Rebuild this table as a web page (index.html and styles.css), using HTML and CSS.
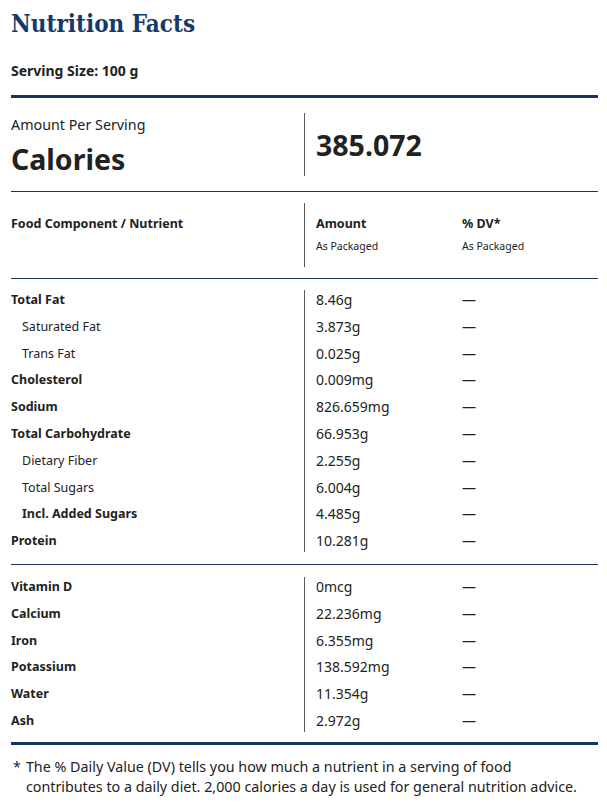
FILE: index.html
```html
<!DOCTYPE html>
<html lang="en">
<head>
<meta charset="utf-8">
<title>Nutrition Facts</title>
<link rel="stylesheet" href="styles.css">
</head>
<body>
<div class="label">
  <h1 class="title">Nutrition Facts</h1>
  <p class="serving">Serving Size: 100 g</p>
  <hr class="rule-thick rule-top">

  <section class="block calories">
    <div class="names">
      <div class="per-serving">Amount Per Serving</div>
      <div class="cal-word">Calories</div>
    </div>
    <div class="figures cal-figure">
      <div class="cal-value">385.072</div>
    </div>
  </section>
  <hr class="rule-thin">

  <section class="block head">
    <div class="names">
      <div class="head-title">Food Component / Nutrient</div>
    </div>
    <div class="figures head-figures">
      <div class="head-col">
        <div class="head-title">Amount</div>
        <div class="head-sub">As Packaged</div>
      </div>
      <div class="head-col">
        <div class="head-title">% DV*</div>
        <div class="head-sub">As Packaged</div>
      </div>
    </div>
  </section>
  <hr class="rule-thin">

  <section class="block rows">
    <div class="names">
      <div class="name bold">Total Fat</div>
      <div class="name indent">Saturated Fat</div>
      <div class="name indent">Trans Fat</div>
      <div class="name bold">Cholesterol</div>
      <div class="name bold">Sodium</div>
      <div class="name bold">Total Carbohydrate</div>
      <div class="name indent">Dietary Fiber</div>
      <div class="name indent">Total Sugars</div>
      <div class="name indent bold">Incl. Added Sugars</div>
      <div class="name bold">Protein</div>
    </div>
    <div class="figures grid">
      <div class="val">8.46g</div><div class="dv">—</div>
      <div class="val">3.873g</div><div class="dv">—</div>
      <div class="val">0.025g</div><div class="dv">—</div>
      <div class="val">0.009mg</div><div class="dv">—</div>
      <div class="val">826.659mg</div><div class="dv">—</div>
      <div class="val">66.953g</div><div class="dv">—</div>
      <div class="val">2.255g</div><div class="dv">—</div>
      <div class="val">6.004g</div><div class="dv">—</div>
      <div class="val">4.485g</div><div class="dv">—</div>
      <div class="val">10.281g</div><div class="dv">—</div>
    </div>
  </section>
  <hr class="rule-thin">

  <section class="block rows last">
    <div class="names">
      <div class="name bold">Vitamin D</div>
      <div class="name bold">Calcium</div>
      <div class="name bold">Iron</div>
      <div class="name bold">Potassium</div>
      <div class="name bold">Water</div>
      <div class="name bold">Ash</div>
    </div>
    <div class="figures grid">
      <div class="val">0mcg</div><div class="dv">—</div>
      <div class="val">22.236mg</div><div class="dv">—</div>
      <div class="val">6.355mg</div><div class="dv">—</div>
      <div class="val">138.592mg</div><div class="dv">—</div>
      <div class="val">11.354g</div><div class="dv">—</div>
      <div class="val">2.972g</div><div class="dv">—</div>
    </div>
  </section>
  <hr class="rule-thick">

  <div class="footnote">
    <span class="star">*</span>
    <p class="note">The % Daily Value (DV) tells you how much a nutrient in a serving of food contributes to a daily diet. 2,000 calories a day is used for general nutrition advice.</p>
  </div>
</div>
</body>
</html>
```
FILE: styles.css
```css
html, body {
  margin: 0;
  padding: 0;
  background: #ffffff;
}

body {
  font-family: "Noto Sans", "Open Sans", sans-serif;
  color: #222222;
}

.label {
  width: 587px;
  margin-left: 11px;
  padding-top: 9px;
}

.title {
  margin: 0;
  font-family: "DejaVu Serif Condensed", "DejaVu Serif", serif;
  font-stretch: condensed;
  font-weight: 700;
  font-size: 24px;
  line-height: 30px;
  color: #15396a;
}

.serving {
  margin: 23px 0 0;
  font-size: 14px;
  line-height: 18px;
  font-weight: 700;
}

.rule-thick {
  margin: 0;
  border: 0;
  height: 3px;
  background: #16365f;
}

.rule-top {
  margin-top: 15px;
}

.rule-thin {
  margin: 0;
  border: 0;
  height: 1px;
  background: #16365f;
}

.block {
  display: grid;
  grid-template-columns: 293px 1fr;
}

.figures {
  border-left: 1px solid #5a5a5a;
  padding-left: 11px;
}

/* Calories */
.calories {
  padding: 15px 0;
}

.calories .names {
  padding-top: 2px;
}

.per-serving {
  font-size: 14.3px;
  line-height: 20px;
}

.cal-word {
  margin-top: 7px;
  font-size: 28.5px;
  line-height: 34px;
  font-weight: 700;
}

.cal-figure {
  display: flex;
  align-items: center;
}

.cal-value {
  font-size: 28.5px;
  line-height: 34px;
  font-weight: 700;
}

/* Header */
.head {
  padding: 11px 0;
}

.head .names {
  padding-top: 12px;
}

.head-figures {
  display: grid;
  grid-template-columns: 146px 1fr;
  padding-top: 12px;
  padding-bottom: 13px;
}

.head-col {
  display: flex;
  flex-direction: column;
  gap: 5px;
}

.head-title {
  font-size: 12.5px;
  line-height: 18px;
  font-weight: 700;
}

.head-sub {
  font-size: 10.5px;
  line-height: 16px;
}

/* Nutrient rows */
.rows {
  padding: 11px 0 12px;
}

.rows.last {
  padding: 12px 0 10px;
}

.rows .names {
  display: flex;
  flex-direction: column;
  gap: 6px;
}

.name {
  font-size: 12.5px;
  line-height: 20.8px;
}

.name.bold {
  font-weight: 700;
}

.name.indent {
  padding-left: 11px;
}

.grid {
  display: grid;
  grid-template-columns: 146px 1fr;
  row-gap: 6px;
}

.val, .dv {
  font-size: 14px;
  line-height: 20.8px;
}

/* Footnote */
.footnote {
  display: flex;
  gap: 5px;
  padding: 12px 0 0 2px;
}

.star {
  font-size: 14.3px;
  line-height: 20.5px;
}

.note {
  margin: 0;
  width: 560px;
  font-size: 14.3px;
  line-height: 20.5px;
}
```
